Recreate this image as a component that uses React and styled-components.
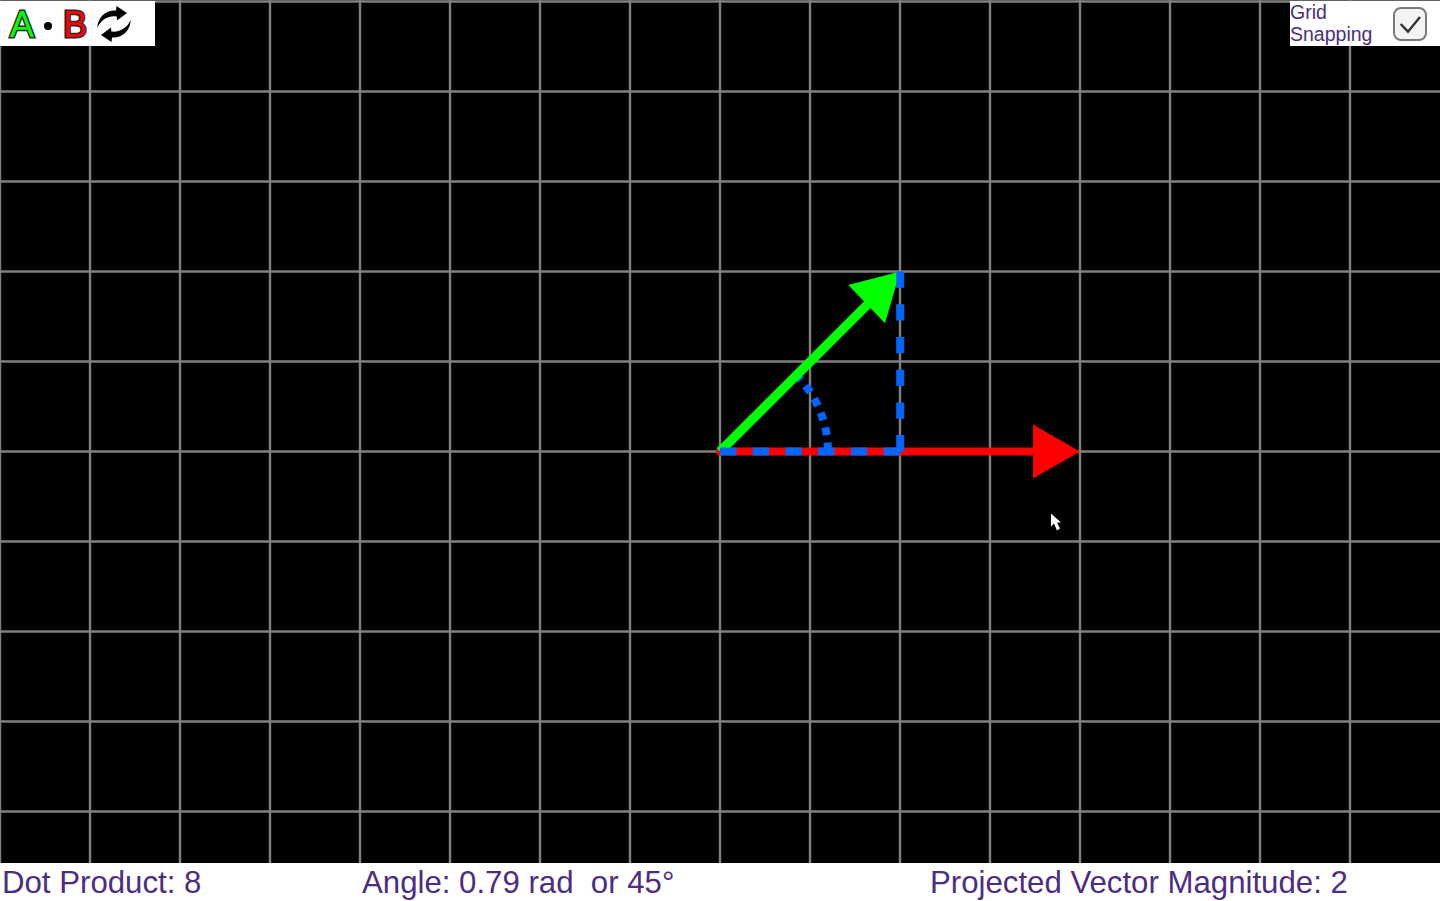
import React from "react";
import styled, { createGlobalStyle } from "styled-components";

const Global = createGlobalStyle`
  html, body { margin: 0; padding: 0; background: #fff; overflow: hidden; }
  body { font-family: "Liberation Sans", Arial, sans-serif; }
`;

const Page = styled.div`
  width: 1440px;
  height: 901px;
  display: flex;
  flex-direction: column;
`;

const Stage = styled.div`
  position: relative;
  flex: none;
  height: 863px;
  background: #000;
  overflow: hidden;
`;

const Board = styled.svg`
  display: block;
  width: 1440px;
  height: 863px;
`;

const TitlePanel = styled.div`
  position: absolute;
  left: 0;
  top: 1px;
  width: 155px;
  height: 45px;
  background: #fff;
  display: flex;
  align-items: center;
`;

const Letter = styled.span`
  font-size: 36px;
  line-height: 45px;
  padding-top: 2px;
  color: ${(p) => p.$color};
  -webkit-text-stroke: 3px #2a2a2a;
  paint-order: stroke fill;
  margin-left: ${(p) => p.$gap}px;
`;

const Dot = styled.span`
  width: 8px;
  height: 8px;
  border-radius: 50%;
  background: #000;
  margin-left: 10px;
  margin-top: 5px;
`;

const SwapIcon = styled.svg`
  width: 36px;
  height: 40px;
  margin-left: 9px;
  margin-top: 1px;
`;

const SnapPanel = styled.label`
  position: absolute;
  right: 0;
  top: 1px;
  width: 150px;
  height: 45px;
  background: #fff;
  display: flex;
  align-items: center;
  justify-content: space-between;
  color: #4b2e83;
  font-size: 19.5px;
  line-height: 22px;
`;

const SnapText = styled.span`
  width: 90px;
  margin-top: -1px;
`;

const CheckBox = styled.span`
  width: 34px;
  height: 34px;
  box-sizing: border-box;
  margin-right: 13px;
  margin-top: 1px;
  border: 2px solid #7a7a7a;
  border-radius: 8px;
  background: #f4f4f4;
  display: flex;
  align-items: center;
  justify-content: center;
`;

const Footer = styled.footer`
  display: grid;
  grid-template-columns: 360px 568px 1fr;
  flex: 1;
  align-items: center;
  padding-top: 2px;
  color: #4b2e83;
  font-size: 31.2px;
  line-height: 36px;
`;

const Readout = styled.span`
  padding-left: 2px;
  white-space: pre;
`;

const xs = Array.from({ length: 16 }, (_, i) => 90 * i);
const ys = Array.from({ length: 10 }, (_, i) => 1.5 + 90 * i);

const CX = 720;
const CY = 451.5;
const polar = (r, deg) => [CX + r * Math.cos((deg * Math.PI) / 180), CY - r * Math.sin((deg * Math.PI) / 180)];
const [ax, ay] = polar(108, 0);
const [bx, by] = polar(108, 45);

const ARROW = "M97.3 28C97.5 18 105 10 116 10.5L116.5 6L127 13L117 20.5L116.7 16.5C108 15.5 101 20 97.3 28Z";

export default function App() {
  return (
    <Page>
      <Global />
      <Stage>
        <Board viewBox="0 0 1440 863">
          <g stroke="#808080" strokeWidth="2.4">
            {xs.map((x) => <line key={x} x1={x} y1="0" x2={x} y2="863" />)}
            {ys.map((y) => <line key={y} x1="0" y1={y} x2="1440" y2={y} />)}
          </g>
          <line x1={CX} y1={CY} x2="1040" y2={CY} stroke="#ff0000" strokeWidth="8" strokeLinecap="round" />
          <polygon points={`1033,424.5 1080,${CY} 1033,478.5`} fill="#ff0000" />
          <path d={`M${ax} ${ay}A108 108 0 0 0 ${bx} ${by}`} fill="none" stroke="#0066ff" strokeWidth="8" strokeDasharray="8 7.4" strokeDashoffset="-1" />
          <line x1={CX} y1={CY} x2="875" y2="297" stroke="#00ff00" strokeWidth="9.5" />
          <polygon points="900,271.5 848.3,285 885,323.3" fill="#00ff00" />
          <line x1={CX} y1={CY} x2="900" y2={CY} stroke="#0066ff" strokeWidth="8" strokeDasharray="16.36 16.36" />
          <line x1="900.2" y1="271.5" x2="900.2" y2={CY} stroke="#0066ff" strokeWidth="8" strokeDasharray="16.36 16.36" />
          <polygon points="1051,513.5 1051,526.5 1054,523.5 1057,530.5 1060,528.5 1057,522.5 1061,522.5" fill="#fff" />
        </Board>
        <TitlePanel>
          <Letter $color="#00ff00" $gap={10}>A</Letter>
          <Dot />
          <Letter $color="#ff0000" $gap={11}>B</Letter>
          <SwapIcon viewBox="96 4 36 40">
            <path d={ARROW} fill="#000" />
            <path d={ARROW} fill="#000" transform="rotate(180 114 24)" />
          </SwapIcon>
        </TitlePanel>
        <SnapPanel>
          <SnapText>Grid Snapping</SnapText>
          <CheckBox>
            <svg width="30" height="30" viewBox="2 2 30 30" fill="none" stroke="#333" strokeWidth="2.4">
              <path d="M7.7 17L15 24.7L27 10" />
            </svg>
          </CheckBox>
        </SnapPanel>
      </Stage>
      <Footer>
        <Readout>Dot Product: 8</Readout>
        <Readout>{"Angle: 0.79 rad  or 45°"}</Readout>
        <Readout>Projected Vector Magnitude: 2</Readout>
      </Footer>
    </Page>
  );
}
